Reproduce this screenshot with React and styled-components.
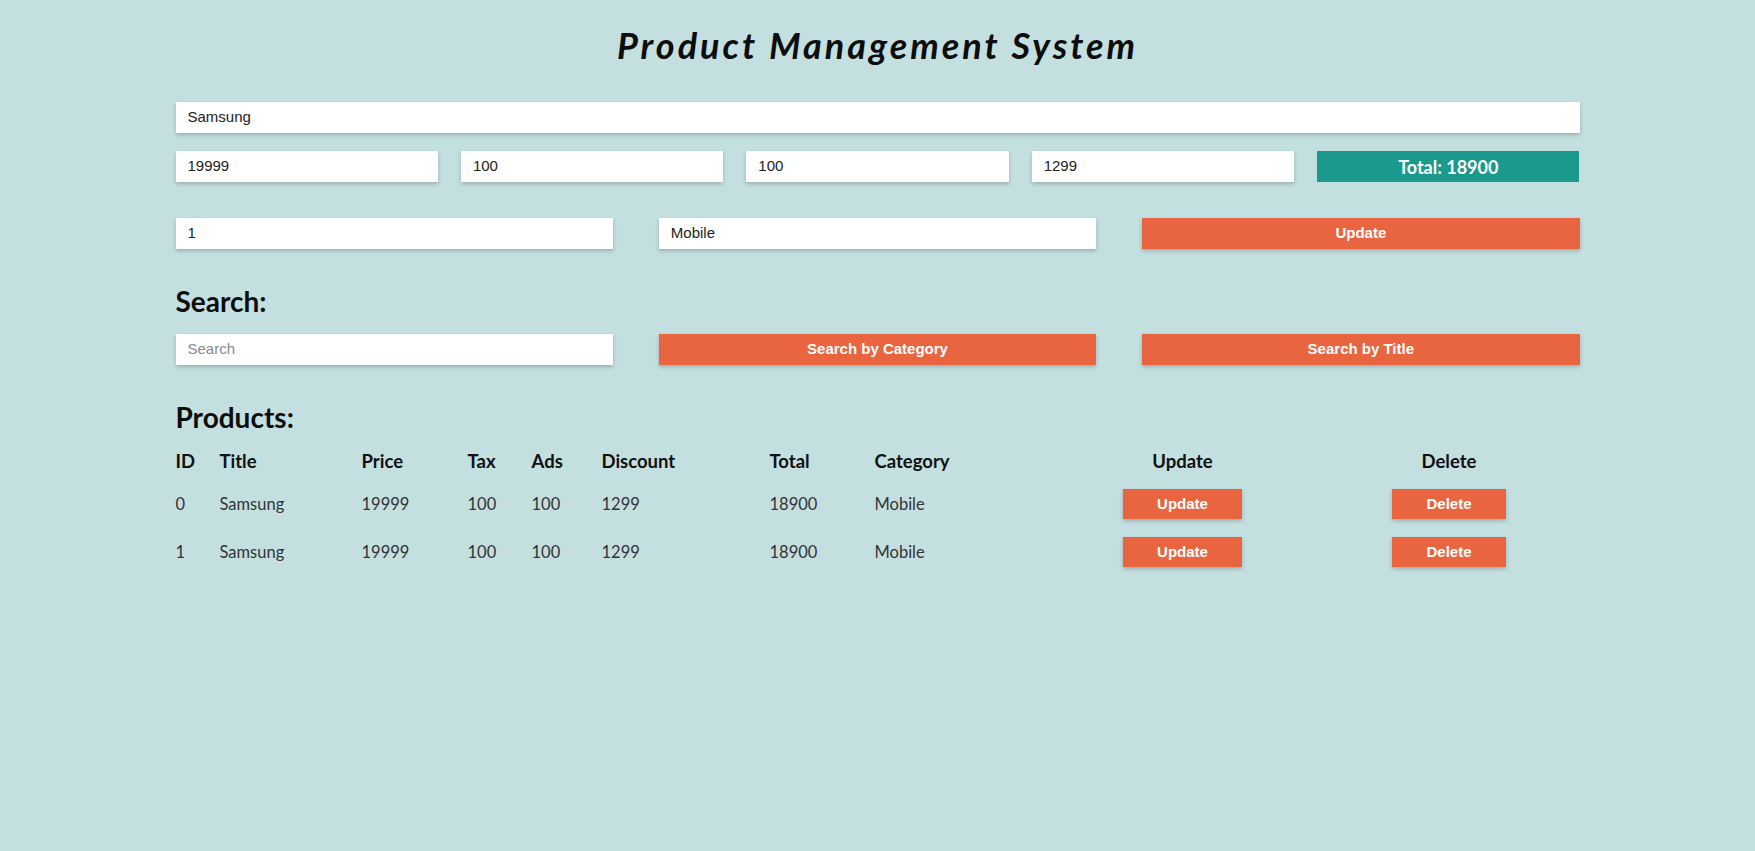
import React from "react";
import styled, { createGlobalStyle } from "styled-components";

const GlobalStyle = createGlobalStyle`
  html, body {
    margin: 0;
    padding: 0;
    background: #c4dfe0;
  }
  body {
    font-family: Lato, "Liberation Sans", sans-serif;
    color: #111;
  }
  * { box-sizing: border-box; }
`;

const Page = styled.div`
  min-height: 851px;
  background: #c4dfe0;
  padding-top: 22px;
`;

const Container = styled.div`
  width: 80%;
  margin: 0 auto;
`;

const Title = styled.h1`
  margin: 0 0 34px;
  font-family: Lato, sans-serif;
  font-style: italic;
  font-weight: 700;
  font-size: 36px;
  line-height: 46px;
  letter-spacing: 3px;
  text-align: center;
  color: #0d0d0d;
`;

const Input = styled.input`
  display: block;
  width: 100%;
  height: 31px;
  border: none;
  outline: none;
  background: #fff;
  padding: 0 12px 2px;
  font-family: "Liberation Sans", Arial, sans-serif;
  font-size: 15px;
  color: #222;
  box-shadow: 0 2px 4px rgba(0, 0, 0, 0.22);
  &::placeholder { color: #8a8a8a; }
`;

const Row = styled.div`
  display: grid;
  grid-template-columns: repeat(${(p) => p.$cols}, 1fr);
  column-gap: ${(p) => p.$gap}px;
  align-items: center;
  margin-top: ${(p) => p.$top || 0}px;
`;

const TotalBox = styled.div`
  height: 31px;
  background: #1a998c;
  color: #fff;
  display: flex;
  align-items: center;
  justify-content: center;
  font-family: Lato, sans-serif;
  font-weight: 700;
  font-size: 18px;
`;

const Button = styled.button`
  height: ${(p) => (p.$small ? 30 : 31)}px;
  border: none;
  background: #e9653f;
  color: #fff;
  font-family: "Liberation Sans", Arial, sans-serif;
  font-weight: 700;
  font-size: 15px;
  padding: ${(p) => (p.$small ? "0 34px 2px" : "0 0 2px")};
  width: ${(p) => (p.$small ? "auto" : "100%")};
  cursor: pointer;
  box-shadow: 0 2px 4px rgba(0, 0, 0, 0.22);
`;

const Heading = styled.h2`
  margin: ${(p) => p.$top}px 0 ${(p) => p.$bottom}px;
  font-family: Lato, sans-serif;
  font-weight: 700;
  font-size: 28px;
  line-height: 34px;
  color: #0d0d0d;
`;

const cols = "44px 142px 106px 64px 70px 168px 105px 172px 272px 1fr";

const TableHead = styled.div`
  display: grid;
  grid-template-columns: ${cols};
  height: 35px;
  padding-top: 1px;
  padding-bottom: 4px;
  align-items: center;
  font-family: Lato, sans-serif;
  font-weight: 700;
  font-size: 18.5px;
  color: #111;
`;

const TableRow = styled.div`
  display: grid;
  grid-template-columns: ${cols};
  height: 48px;
  align-items: center;
  font-family: Lato, sans-serif;
  font-size: 16.5px;
  color: #333;
`;

const Cell = styled.div`
  text-align: ${(p) => (p.$center ? "center" : "left")};
  display: ${(p) => (p.$center ? "flex" : "block")};
  justify-content: center;
`;

const products = [
  { id: 0, title: "Samsung", price: 19999, tax: 100, ads: 100, discount: 1299, total: 18900, category: "Mobile" },
  { id: 1, title: "Samsung", price: 19999, tax: 100, ads: 100, discount: 1299, total: 18900, category: "Mobile" },
];

export default function App() {
  return (
    <>
      <GlobalStyle />
      <Page>
        <Container>
          <Title>Product Management System</Title>
          <Input defaultValue="Samsung" />
          <Row $cols={5} $gap={23} $top={18}>
            <Input defaultValue="19999" />
            <Input defaultValue="100" />
            <Input defaultValue="100" />
            <Input defaultValue="1299" />
            <TotalBox>Total: 18900</TotalBox>
          </Row>
          <Row $cols={3} $gap={46} $top={36}>
            <Input defaultValue="1" />
            <Input defaultValue="Mobile" />
            <Button>Update</Button>
          </Row>
          <Heading $top={35} $bottom={16}>Search:</Heading>
          <Row $cols={3} $gap={46}>
            <Input placeholder="Search" />
            <Button>Search by Category</Button>
            <Button>Search by Title</Button>
          </Row>
          <Heading $top={35} $bottom={11}>Products:</Heading>
          <TableHead>
            <Cell>ID</Cell>
            <Cell>Title</Cell>
            <Cell>Price</Cell>
            <Cell>Tax</Cell>
            <Cell>Ads</Cell>
            <Cell>Discount</Cell>
            <Cell>Total</Cell>
            <Cell>Category</Cell>
            <Cell $center>Update</Cell>
            <Cell $center>Delete</Cell>
          </TableHead>
          {products.map((p) => (
            <TableRow key={p.id}>
              <Cell>{p.id}</Cell>
              <Cell>{p.title}</Cell>
              <Cell>{p.price}</Cell>
              <Cell>{p.tax}</Cell>
              <Cell>{p.ads}</Cell>
              <Cell>{p.discount}</Cell>
              <Cell>{p.total}</Cell>
              <Cell>{p.category}</Cell>
              <Cell $center><Button $small>Update</Button></Cell>
              <Cell $center><Button $small>Delete</Button></Cell>
            </TableRow>
          ))}
        </Container>
      </Page>
    </>
  );
}
